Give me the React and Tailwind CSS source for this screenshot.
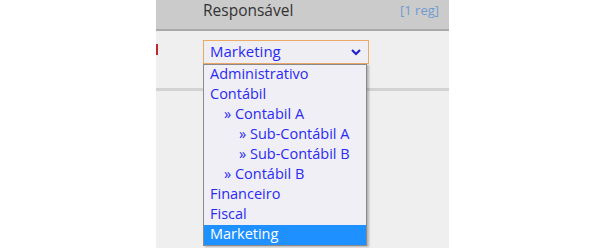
import React from "react";

const options = [
    { label: "Administrativo", level: 0 },
    { label: "Contábil", level: 0 },
    { label: "» Contabil A", level: 1 },
    { label: "» Sub-Contábil A", level: 2 },
    { label: "» Sub-Contábil B", level: 2 },
    { label: "» Contábil B", level: 1 },
    { label: "Financeiro", level: 0 },
    { label: "Fiscal", level: 0 },
    { label: "Marketing", level: 0, selected: true },
];

const indent = ["pl-[6px]", "pl-[20px]", "pl-[35px]"];

const App = () => {
    return (
        <div className="w-[606px] h-[248px] bg-white overflow-hidden font-['Open_Sans',sans-serif]">
            <div className="ml-[156px] w-[293px] h-full bg-[#efefef]">
                {/* Cabeçalho */}
                <div className="h-[31px] bg-[#cbcbcb] border-b-2 border-[#a9a9a9] flex items-center pl-[47px] pr-[10px] pb-[8px]">
                    <span className="text-[15.5px] text-[#333] leading-none">Responsável</span>
                    <span className="ml-auto text-[13px] text-[#6f9bd0] leading-none">[1 reg]</span>
                </div>

                {/* Linha */}
                <div className="h-[60px] border-b-[3px] border-[#d2d2d2] flex items-start pt-[9px]">
                    <div className="w-[2px] h-[11px] mt-[4px] bg-[#c0262c]"></div>
                    <div className="ml-[45px] relative">
                        <div className="w-[166px] h-[24px] border border-[#eda865] bg-[#efeff3] flex items-center">
                            <span className="pl-[6px] pb-[1px] text-[15px] text-[#2a2af5] leading-none">Marketing</span>
                            <svg className="ml-auto mr-[6px]" width="12" height="8" viewBox="0 0 12 8">
                                <path d="M2 2 L6 6 L10 2" fill="none" stroke="#2020d0" strokeWidth="2.2" />
                            </svg>
                        </div>

                        {/* Lista suspensa */}
                        <div className="absolute left-0 top-[24px] w-[164px] bg-[#f0eff5] border border-[#8a8a8a] shadow-[2px_1px_2px_rgba(0,0,0,0.25)]">
                            {options.map((o) => (
                                <div
                                    key={o.label}
                                    className={`h-[20px] flex items-center pb-[1px] text-[14.5px] leading-none ${indent[o.level]} ${
                                        o.selected ? "bg-[#1e90ff] text-white" : "text-[#2a2af5]"
                                    }`}
                                >
                                    {o.label}
                                </div>
                            ))}
                        </div>
                    </div>
                </div>
            </div>
        </div>
    );
};

export default App;
